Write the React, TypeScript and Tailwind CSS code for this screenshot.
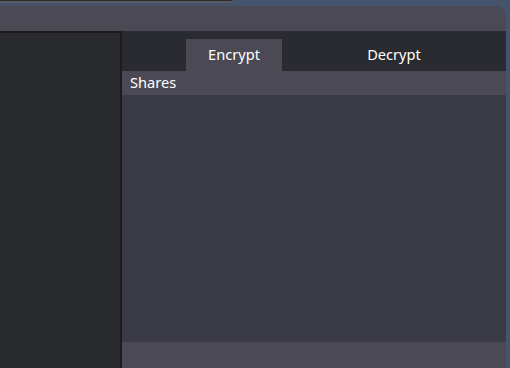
import React from 'react';

const App: React.FC = () => {
  return (
    <div className="w-[510px] h-[368px] bg-[#44546c] flex flex-col overflow-hidden font-['Noto_Sans',sans-serif] text-[14.6px] text-white">
      {/* edge of the window behind */}
      <div className="h-[6px] shrink-0">
        <div className="w-[233px] h-[3px] bg-[#2a2b30] border-b-2 border-[#5c5c60] rounded-br-[6px]" />
      </div>

      {/* window */}
      <div className="flex-1 mr-[4px] bg-[#4b4a54] rounded-tr-[10px] flex flex-col min-h-0">
        <div className="h-[25px] shrink-0" />
        <div className="flex-1 flex min-h-0">
          {/* left panel */}
          <div className="w-[122px] shrink-0 bg-[#2a2b2f] border-t-2 border-r-2 border-[#1c1c1e]" />

          {/* main */}
          <div className="flex-1 flex flex-col">
            <div className="h-[40px] shrink-0 bg-[#2a2b30] flex items-end pl-[64px]">
              <div className="w-[96px] h-[32px] bg-[#4b4a54] flex items-center justify-center">Encrypt</div>
              <div className="flex-1 h-[32px] flex items-center justify-center">Decrypt</div>
            </div>
            <div className="h-[24px] shrink-0 bg-[#4b4a54] pl-[8px] flex items-center">Shares</div>
            <div className="flex-1 bg-[#3a3a44]" />
            <div className="h-[26px] shrink-0 bg-[#4b4a54]" />
          </div>
        </div>
      </div>
    </div>
  );
};

export default App;
